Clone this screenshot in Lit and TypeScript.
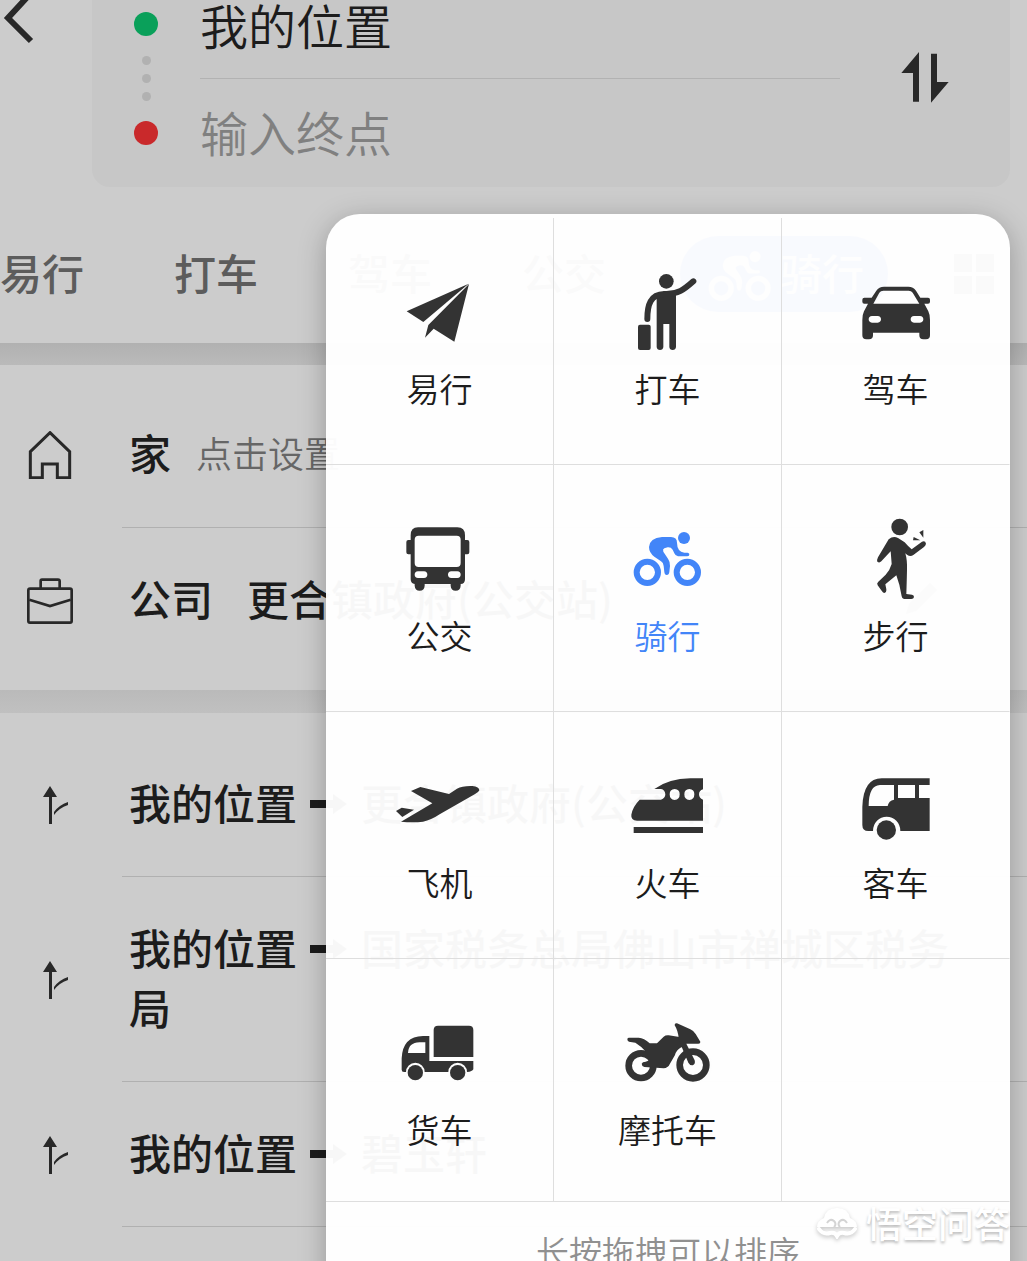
import { LitElement, html, svg, css } from "lit";
import { customElement, property, state } from "lit/decorators.js";

interface Mode {
  id: string;
  label: string;
  box: string;
  art: unknown;
}

const bikeArt = svg`
  <g fill="none" stroke="currentColor" stroke-width="18">
    <circle cx="801" cy="187" r="32"/><circle cx="921" cy="187" r="32"/>
  </g>
  <circle cx="911" cy="84" r="18"/>
  <path d="M845 81H872Q890 82 890 98Q890 112 896 120Q901 127 912 128H922Q928 129 927 134Q926 139 920 139H893Q885 138 882 130L877 119Q872 111 862 112L852 115Q846 118 849 125L863 146Q869 154 869 168L867 186Q866 195 859 195Q853 195 852 186L850 168Q849 158 842 154L822 140Q806 128 806 111Q808 84 845 81Z"/>`;

const modes: Mode[] = [
  {
    id: "easy",
    label: "易行",
    box: "37 12 288 288",
    art: svg`<path d="M81 154L267 71L131 186Z"/><path d="M268 72L224 245L162 206L136 233L146 195Z"/>`,
  },
  {
    id: "taxi",
    label: "打车",
    box: "719 12 288 288",
    art: svg`
      <circle cx="858" cy="64" r="22"/>
      <path d="M829 112V261Q830 270 839 270Q848 270 849 261V192H867V261Q868 270 877 270Q886 270 887 261V106L880 94H850Z"/>
      <path fill="none" stroke="currentColor" stroke-width="18" stroke-linecap="round" d="M801 177C801 135 810 103 852 102C893 104 912 88 939 64"/>
      <rect x="773" y="194" width="38" height="76" rx="6"/>`,
  },
  {
    id: "drive",
    label: "驾车",
    box: "204 12 288 288",
    art: svg`<path fill-rule="evenodd" d="M275 113L289 92Q297 80 312 80H385Q400 80 408 92L421 113H444Q450 113 450 119V125Q450 131 444 131H433L445 154Q450 164 450 180V226Q450 238 438 238H430Q418 238 418 226V218H279V226Q279 238 267 238H259Q247 238 247 226V180Q247 164 252 154L264 131H253Q247 131 247 125V119Q247 113 253 113ZM280 131H418L398 98Q394 92 386 92H310Q302 92 298 98ZM276 168Q266 169 266 178Q266 187 276 188H293Q303 187 303 178Q303 169 293 168ZM402 168Q392 169 392 178Q392 187 402 188H420Q430 187 430 178Q430 169 420 168Z"/>`,
  },
  {
    id: "bus",
    label: "公交",
    box: "37 3 288 288",
    art: svg`<path fill-rule="evenodd" d="M115 52H233Q256 52 256 76V90H263Q269 90 269 96V127Q269 133 263 133H256V208Q256 222 243 222V227Q242 242 228 242Q214 242 213 227V222H135V227Q134 242 120 242Q106 242 105 227V222Q93 220 93 208V133H86Q80 133 80 127V96Q80 90 86 90H93V76Q93 52 115 52ZM117 77Q105 77 105 89V159Q105 171 117 171H231Q243 171 243 159V89Q243 77 231 77ZM115 184Q105 185 105 194Q105 203 115 204H133Q143 203 143 194Q143 185 133 184ZM215 184Q205 185 205 194Q205 203 215 204H233Q243 203 243 194Q243 185 233 184Z"/>`,
  },
  { id: "ride", label: "骑行", box: "719 3 288 288", art: bikeArt },
  {
    id: "walk",
    label: "步行",
    box: "24 33 288 288",
    art: svg`
      <circle cx="179" cy="81" r="25"/>
      <path d="M146 118Q160 106 174 114L194 127Q206 141 215 148L246 125Q256 121 258 131Q257 137 252 141L220 165Q211 171 201 164L196 160Q202 180 201 210Q200 255 199 282L216 284Q222 285 222 291Q221 297 214 297H192Q186 297 185 289Q180 255 169 226L136 253L139 268Q140 277 133 279Q129 279 126 274L113 256Q109 250 115 245L137 224Q150 210 155 192L152 154L124 184Q118 190 112 185Q110 180 114 172Z"/>
      <path d="M221 111L241 121H219ZM238 97L250 90V113Z"/>`,
  },
  {
    id: "plane",
    label: "飞机",
    box: "37 -6 288 288",
    art: svg`<path d="M94 93L122 81L208 102L232 86Q248 77 278 78Q299 80 299 91Q297 97 285 103L180 163Q155 180 130 185Q100 188 64 185L158 130Z"/><path d="M49 153L66 143L103 149L68 171Z"/>`,
  },
  {
    id: "train",
    label: "火车",
    box: "719 -6 288 288",
    art: svg`
      <path fill-rule="evenodd" d="M822 87Q865 56 930 55H968V88Q956 92 956 103Q956 115 968 119V182H770Q751 181 753 164Q757 140 778 119H842Q855 115 855 103Q854 89 842 87ZM883 87Q868 88 868 103Q868 119 883 120Q898 119 898 103Q898 88 883 87ZM927 87Q912 88 912 103Q912 119 927 120Q942 119 942 103Q942 88 927 87Z"/>
      <rect x="760" y="201" width="208" height="18"/>`,
  },
  {
    id: "coach",
    label: "客车",
    box: "24 -6 288 288",
    art: svg`
      <path fill-rule="evenodd" d="M269 55V75H237V114H269V213H181A41 43 0 0 0 99 213H85Q67 213 67 195V140Q70 55 125 55ZM86 138H143Q146 122 162 119V75H120Q86 76 86 138ZM174 75V114H225V75Z"/>
      <circle cx="139" cy="210" r="29"/>`,
  },
  {
    id: "truck",
    label: "货车",
    box: "37 -15 288 288",
    art: svg`
      <path d="M175 47H268Q281 47 281 60V141H162V60Q162 47 175 47Z"/>
      <path fill-rule="evenodd" d="M149 78V153H281V178Q278 185 262 186A28 28 0 0 0 206 186H135A28 28 0 0 0 79 186H73Q66 186 66 179V145Q69 79 130 78ZM85 129H137V97H120Q86 98 85 129Z"/>
      <circle cx="107" cy="188" r="23"/><circle cx="234" cy="188" r="23"/>`,
  },
  {
    id: "moto",
    label: "摩托车",
    box: "719 -15 288 288",
    art: svg`
      <circle cx="782" cy="167" r="37" fill="none" stroke="currentColor" stroke-width="20"/>
      <path d="M745 83H775Q791 84 808 100H830L850 80Q856 75 865 76L902 82L920 110L903 112Q888 120 884 135L868 163Q863 174 850 175L828 173L792 171Q784 168 784 161Q786 155 796 155L810 150Q800 120 765 98L746 95Q741 93 741 88Q741 83 745 83Z"/>
      <circle cx="938" cy="165" r="53" fill="none" stroke="#fdfdfd" stroke-width="7"/>
      <circle cx="938" cy="165" r="40" fill="none" stroke="currentColor" stroke-width="20"/>
      <path d="M902 106L924 158Q929 167 937 166Q946 163 943 151L918 101H954Q961 101 960 95L946 72Q941 63 930 58L890 40Q882 39 883 46Q893 62 895 85Z"/>`,
  },
];

const homeArt = svg`<path fill="none" stroke="currentColor" stroke-width="9" d="M150 248L209 305V383H172V342H127V383H91V305Z"/>`;
const caseArt = svg`<g fill="none" stroke="currentColor" stroke-width="8"><rect x="85" y="713" width="130" height="102" rx="5"/><path d="M122 713V690Q122 686 126 686H174Q179 686 179 691V713M88 746L150 765L212 746"/></g>`;
const forkArt = svg`<path d="M24 5L31 16H26V43H23V16H17Z"/><path d="M28 31Q33 24 42 21V24Q33 27 28 34Z"/>`;

@customElement("mode-tile")
export class ModeTile extends LitElement {
  static styles = css`
    :host { display: block; color: #333; }
    :host([active]) { color: #4285f8; }
    .tile {
      width: 100%; height: 100%; box-sizing: border-box;
      display: flex; flex-direction: column; align-items: center; gap: 8px;
      padding: 46px 0 0; border: 0; background: none; color: inherit; font: inherit;
    }
    .art { width: 96px; height: 96px; fill: currentColor; flex: none; }
    .label { font-size: 33px; line-height: 40px; font-weight: 350; color: #1c1c1c; }
    :host([active]) .label { color: inherit; }
  `;
  @property({ attribute: false }) mode!: Mode;
  @property({ type: Boolean, reflect: true }) active = false;

  render() {
    return html`<button class="tile" type="button" aria-pressed=${this.active ? "true" : "false"}>
      <svg class="art" viewBox=${this.mode.box} aria-hidden="true">${this.mode.art}</svg>
      <span class="label">${this.mode.label}</span>
    </button>`;
  }
}

@customElement("app-root")
export class AppRoot extends LitElement {
  static styles = css`
    :host {
      display: block; position: relative; height: 100vh; overflow: hidden;
      background: #ccc; color: #1c1c1c;
      font-family: "Noto Sans CJK SC", "Noto Sans", sans-serif;
    }
    button { font: inherit; color: inherit; border: 0; background: none; padding: 0; margin: 0; cursor: pointer; }
    svg { display: block; fill: currentColor; flex: none; }

    .head { display: flex; align-items: flex-start; padding-right: 17px; color: #282828; }
    .back { width: 92px; }
    .back svg { width: 36px; height: 44px; }
    .trip { flex: 1; display: flex; background: #c7c7c7; border-radius: 0 0 18px 18px; }
    .stops { width: 108px; padding-top: 12px; display: flex; flex-direction: column; align-items: center; gap: 20px; }
    .stop { width: 24px; height: 24px; border-radius: 50%; background: #0aa05a; }
    .stop.end { background: #c9292b; }
    .trail { display: flex; flex-direction: column; gap: 9px; }
    .trail i { width: 9px; height: 9px; border-radius: 50%; background: #b1b1b1; }
    .fields { flex: 1; min-width: 0; display: flex; flex-direction: column; }
    .field {
      font: inherit; font-weight: 350; font-size: 48px; line-height: 60px; height: 60px;
      border: 0; padding: 0; margin: -6px 0 0; background: none; color: #1c1c1c; outline: 0; width: 100%;
    }
    .field::placeholder { color: #808080; opacity: 1; }
    .row-a, .row-b { display: flex; }
    .row-a { padding-bottom: 24px; border-bottom: 1px solid #b2b2b2; }
    .row-b { padding: 28px 0 26px; }
    .swap { width: 170px; display: flex; justify-content: center; padding-top: 52px; }
    .swap svg { width: 48px; height: 51px; }

    .tabs { display: flex; align-items: center; padding: 49px 33px 31px 0; color: #5c5c5c; }
    .tab { font-size: 42px; line-height: 72px; font-weight: 500; padding: 0 90px 4px 0; white-space: nowrap; }
    .tab.on {
      display: flex; align-items: center; gap: 8px; margin-left: -16px; padding: 0 24px 4px 28px;
      border-radius: 38px; background: #3466cc; color: #ccc;
    }
    .tab.on svg { width: 64px; height: 64px; }
    .all { margin-left: auto; }
    .all svg { width: 40px; height: 40px; }

    .band { height: 22px; background: linear-gradient(#b1b1b1, #bababa); }
    .band.soft { height: 23px; background: linear-gradient(#bababa, #c0c0c0); }
    .list { list-style: none; margin: 0; padding: 17px 0; }
    .list.last { padding: 19px 0 0; }
    .item { display: flex; align-items: center; }
    .item > svg { width: 48px; height: 48px; margin: 0 48px 0 26px; color: #282828; }
    .body {
      flex: 1; display: flex; align-items: center; padding: 40px 47px 44px 7px;
      border-bottom: 1px solid #b0b0b0; font-size: 42px; line-height: 60px; font-weight: 500;
    }
    .places .body { padding-bottom: 45px; }
    .places .item:last-child .body { border-bottom: 0; }
    .hint { font-size: 36px; font-weight: 350; color: #666; margin-left: 25px; }
    .where { margin-left: 34px; }
    .pen { width: 36px; height: 36px; margin-left: auto; margin-right: 40px; color: #888; }
    .to { display: inline-block; vertical-align: 4px; width: 38px; height: 24px; margin: 0 13px; }

    .sheet {
      position: absolute; top: 214px; left: 326px; right: 17px; box-sizing: border-box;
      padding-top: 4px; border-radius: 34px 34px 0 0;
      background: rgba(255, 255, 255, 0.97); box-shadow: 0 6px 28px rgba(0, 0, 0, 0.26);
    }
    .grid { display: grid; grid-template-columns: repeat(3, 1fr); grid-template-rows: repeat(3, 247px) 243px; }
    .cell { border-right: 1px solid #dedede; border-bottom: 1px solid #dedede; }
    .cell:nth-child(3n) { border-right-color: transparent; }
    .tip { margin: 0; padding: 27px 0 60px; text-align: center; font-size: 33px; line-height: 44px; font-weight: 350; color: #909090; }

    .mark {
      position: absolute; right: 17px; top: 1198px; display: flex; align-items: center; gap: 8px;
      color: #fff; font-size: 36px; line-height: 48px; font-weight: 500;
      text-shadow: 0 2px 3px rgba(0, 0, 0, 0.28); pointer-events: none;
    }
    .mark svg { width: 42px; height: 34px; filter: drop-shadow(0 2px 2px rgba(0, 0, 0, 0.22)); }
  `;

  @state() private current = "ride";

  private readonly routes = ["更合镇政府(公交站)", "国家税务总局佛山市禅城区税务局", "碧玉轩"];

  private arrow() {
    return html`<svg class="to" viewBox="0 0 38 24" role="img" aria-label="到"><path d="M0 8H23V2L37 12L23 22V16H0Z"/></svg>`;
  }

  render() {
    return html`
      <header class="head">
        <button class="back" type="button" aria-label="返回">
          <svg viewBox="0 0 36 44"><path fill="none" stroke="currentColor" stroke-width="6" d="M31 -7L8 18L31 41"/></svg>
        </button>
        <div class="trip">
          <div class="stops">
            <span class="stop"></span>
            <span class="trail"><i></i><i></i><i></i></span>
            <span class="stop end"></span>
          </div>
          <div class="fields">
            <div class="row-a"><input class="field" type="text" aria-label="起点" .value=${"我的位置"} /></div>
            <div class="row-b"><input class="field" type="text" aria-label="终点" placeholder="输入终点" /></div>
          </div>
          <button class="swap" type="button" aria-label="交换起点和终点">
            <svg viewBox="903 157 144 153"><path d="M957 157V306H939V220H904ZM993 162H1011V247H1046L993 309Z"/></svg>
          </button>
        </div>
      </header>

      <nav class="tabs">
        <button class="tab" type="button">易行</button>
        <button class="tab" type="button">打车</button>
        <button class="tab" type="button">驾车</button>
        <button class="tab" type="button">公交</button>
        <button class="tab on" type="button">
          <svg viewBox="758 30 208 208" aria-hidden="true">${bikeArt}</svg>骑行
        </button>
        <button class="all" type="button" aria-label="全部">
          <svg viewBox="0 0 40 40"><path d="M0 0H18V18H0ZM22 0H40V18H22ZM0 22H18V40H0ZM22 22H40V40H22Z"/></svg>
        </button>
      </nav>

      <div class="band"></div>
      <ul class="list places">
        <li class="item">
          <svg viewBox="78 243 144 144" aria-hidden="true">${homeArt}</svg>
          <div class="body"><span>家</span><span class="hint">点击设置</span></div>
        </li>
        <li class="item">
          <svg viewBox="78 678 144 144" aria-hidden="true">${caseArt}</svg>
          <div class="body">
            <span>公司</span><span class="where">更合镇政府(公交站)</span>
            <svg class="pen" viewBox="0 0 36 36" aria-hidden="true"><path d="M2 34L5 24L26 3L33 10L12 31Z"/></svg>
          </div>
        </li>
      </ul>
      <div class="band soft"></div>
      <ul class="list last">
        ${this.routes.map(
          (to) => html`<li class="item">
            <svg viewBox="0 0 48 48" aria-hidden="true">${forkArt}</svg>
            <div class="body"><span>我的位置${this.arrow()}${to}</span></div>
          </li>`
        )}
      </ul>

      <section class="sheet">
        <div class="grid">
          ${modes.map(
            (m) => html`<mode-tile class="cell" .mode=${m} ?active=${m.id === this.current}
              @click=${() => (this.current = m.id)}></mode-tile>`
          )}
          <div class="cell"></div>
        </div>
        <p class="tip">长按拖拽可以排序</p>
      </section>

      <div class="mark">
        <svg viewBox="0 0 42 34" aria-hidden="true">
          <path d="M8 13Q10 3 21 3Q32 3 34 13Q41 16 41 22H1Q1 16 8 13Z"/>
          <path fill="none" stroke="currentColor" stroke-width="4" stroke-linecap="round" d="M3 24Q7 30 14 28Q19 27 21 31Q23 27 28 28Q35 30 39 24"/>
          <path fill="none" stroke="#d4d4d4" stroke-width="2" d="M11 18Q14 13 18 16Q21 19 18 22M31 18Q28 13 24 16Q21 19 24 22"/>
        </svg>
        <span>悟空问答</span>
      </div>
    `;
  }
}
